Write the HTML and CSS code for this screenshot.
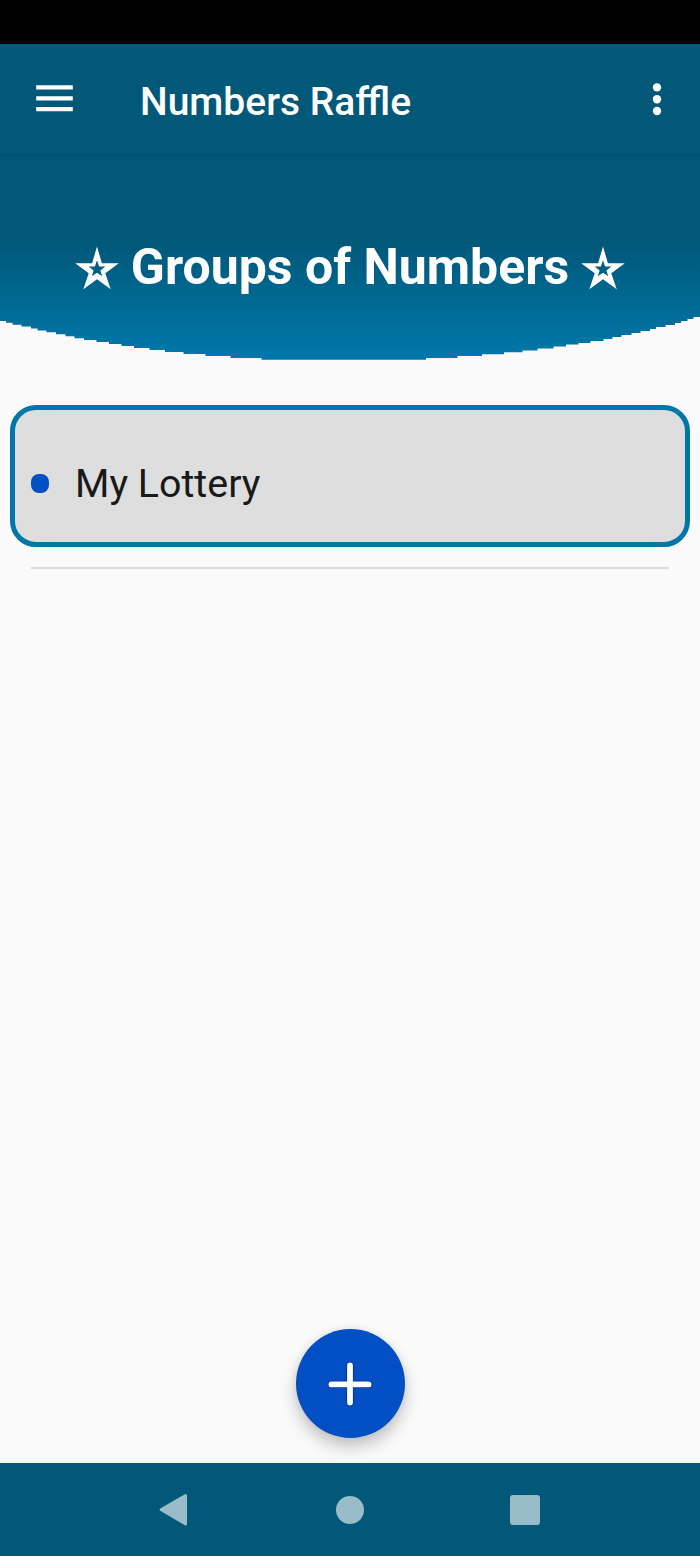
FILE: index.html
```html
<!DOCTYPE html>
<html lang="en">
<head>
    <meta charset="UTF-8">
    <title>Numbers Raffle</title>
    <link rel="stylesheet" href="styles.css">
</head>
<body>
    <div class="status-bar"></div>
    <header class="app-bar">
        <button class="icon-button menu-button" aria-label="Menu">
            <svg width="37" height="27" viewBox="0 0 37 27" fill="#fff">
                <path d="M.2 .3h36.6v4.200H.2zM.2 11.200h36.600v4.200H.2zM.2 22.100h36.600v4.200H.2z"/>
            </svg>
        </button>
        <h1 class="app-title">Numbers Raffle</h1>
        <button class="icon-button" aria-label="More">
            <svg width="10" height="34" viewBox="0 0 10 34" fill="#fff">
                <circle cx="5" cy="5.4" r="4.2"/>
                <circle cx="5" cy="17.2" r="4.2"/>
                <circle cx="5" cy="29" r="4.2"/>
            </svg>
        </button>
    </header>
    <section class="hero">
        <svg class="star" width="44" height="44" viewBox="0 0 44 44" fill="#fff" fill-rule="evenodd">
            <path d="M22 .5L26.900 17.200H43.800L30.300 27.200L35.700 43.300L22 33.300L8.300 43.300L13.700 27.200L.2 17.200H17.100zM22 14.200L19.900 20.400H13.600L18.600 24.400L16.800 30.200L22 26.800L27.200 30.200L25.400 24.400L30.400 20.400H24.100z"/>
        </svg>
        <h2 class="hero-title">Groups of Numbers</h2>
        <svg class="star" width="44" height="44" viewBox="0 0 44 44" fill="#fff" fill-rule="evenodd">
            <path d="M22 .5L26.900 17.200H43.800L30.300 27.200L35.700 43.300L22 33.300L8.300 43.300L13.700 27.200L.2 17.200H17.100zM22 14.200L19.900 20.400H13.600L18.600 24.400L16.800 30.200L22 26.800L27.200 30.200L25.400 24.400L30.400 20.400H24.100z"/>
        </svg>
    </section>
    <main>
        <div class="group-card">
            <span class="bullet"></span>
            <span class="group-name">My Lottery</span>
        </div>
        <hr class="divider">
        <button class="fab" aria-label="Add group">
            <svg width="46" height="46" viewBox="0 0 46 46" stroke-linecap="round" fill="none">
                <path d="M23 4.400v37.200M4.400 23.400h37.200" stroke="#062f85" stroke-width="7.200"/>
                <path d="M23 4.400v37.200M4.400 23.400h37.200" stroke="#fff" stroke-width="5.800"/>
            </svg>
        </button>
    </main>
    <nav class="nav-bar">
        <svg width="30" height="34" viewBox="0 0 30 34" fill="#99bcc9">
            <path d="M1.200 15.600L25.800 1.200Q28 .400 28 2.500V31Q28 33.200 25.800 32.200L1.200 17.800Q0 16.700 1.200 15.600z"/>
        </svg>
        <span class="nav-home"></span>
        <span class="nav-recent"></span>
    </nav>
</body>
</html>
```

FILE: styles.css
```css
* {
    box-sizing: border-box;
}
body {
    margin: 0;
    height: 1556px;
    display: flex;
    flex-direction: column;
    font-family: Roboto, sans-serif;
    background-color: #fafafa;
    color: #191919;
}
svg {
    display: block;
}
button {
    padding: 0;
    border: none;
    background: none;
    cursor: pointer;
}
.status-bar {
    height: 44px;
    background-color: #000;
}
.app-bar {
    height: 110px;
    padding: 0 38px 0 36px;
    display: flex;
    align-items: center;
    background-color: #015879;
    color: #fff;
}
.menu-button {
    margin-bottom: 2px;
}
.app-title {
    flex: 1;
    margin: 6px 0 0 67px;
    font-size: 39px;
    font-weight: 500;
    line-height: 46px;
}
/* bottom edge is a stepped arc */
.hero {
    height: 206px;
    padding-top: 83px;
    display: flex;
    align-items: flex-start;
    justify-content: center;
    gap: 12px;
    color: #fff;
    background: linear-gradient(rgba(0, 30, 45, 0.14), rgba(0, 30, 45, 0) 7px), linear-gradient(#015879 43%, #0077a8 96%);
    clip-path: polygon(0 0, 700px 0, 700px 163px, 693.5px 163px, 693.5px 165px, 687.5px 165px, 687.5px 167px, 681px 167px, 681px 169px, 675px 169px, 675px 171px, 665.5px 171px, 665.5px 173px, 656px 173px, 656px 175px, 650px 175px, 650px 177px, 640.5px 177px, 640.5px 179px, 631.5px 179px, 631.5px 181px, 621.5px 181px, 621.5px 183px, 612.5px 183px, 612.5px 185px, 603.5px 185px, 603.5px 187px, 590.5px 187px, 590.5px 189px, 578.5px 189px, 578.5px 190.5px, 566px 190.5px, 566px 192.5px, 553.5px 192.5px, 553.5px 194.5px, 537.5px 194.5px, 537.5px 196.5px, 522.5px 196.5px, 522.5px 198.3px, 504px 198.3px, 504px 200.3px, 482px 200.3px, 482px 202px, 457.5px 202px, 457.5px 204px, 426px 204px, 426px 205.7px, 261.5px 205.7px, 261.5px 204px, 230.5px 204px, 230.5px 202px, 205.5px 202px, 205.5px 200px, 183.5px 200px, 183.5px 198px, 165px 198px, 165px 196px, 149.5px 196px, 149.5px 194px, 134px 194px, 134px 192px, 121.5px 192px, 121.5px 190px, 109px 190px, 109px 188px, 96.5px 188px, 96.5px 186px, 84px 186px, 84px 184.3px, 74.5px 184.3px, 74.5px 182.3px, 65.5px 182.3px, 65.5px 180.3px, 56px 180.3px, 56px 178.3px, 46.5px 178.3px, 46.5px 176.5px, 37.5px 176.5px, 37.5px 174.5px, 31px 174.5px, 31px 172.5px, 21.5px 172.5px, 21.5px 170.7px, 12.5px 170.7px, 12.5px 168.7px, 6px 168.7px, 6px 167px, 0 167px);
}
.star {
    margin-top: 9px;
}
.hero-title {
    margin: 0;
    font-size: 50px;
    font-weight: 700;
    line-height: 60px;
}
main {
    flex: 1;
    padding-top: 45px;
    display: flex;
    flex-direction: column;
}
.group-card {
    height: 142px;
    margin: 0 10px;
    padding: 14px 16px 0;
    display: flex;
    align-items: center;
    border: 5px solid #0077a8;
    border-radius: 26px;
    background-color: #dedede;
}
.bullet {
    width: 18px;
    height: 19px;
    border-radius: 8px;
    background-color: #014fc3;
}
.group-name {
    margin: 2px 0 0 26px;
    font-size: 39.4px;
    line-height: 46px;
}
.divider {
    width: 638px;
    height: 2px;
    margin: 20px auto 0;
    border: none;
    background-color: #dadada;
}
.fab {
    width: 109px;
    height: 109px;
    margin: auto auto 25px;
    display: flex;
    align-items: center;
    justify-content: center;
    border-radius: 50%;
    background-color: #014fc3;
    box-shadow: 0 9px 16px rgba(0, 0, 0, 0.22), 0 0 7px rgba(0, 0, 0, 0.08);
}
.nav-bar {
    height: 93px;
    padding: 0 160px 0 159px;
    display: flex;
    align-items: center;
    justify-content: space-between;
    background-color: #015879;
}
.nav-home {
    width: 28px;
    height: 28px;
    border-radius: 50%;
    background-color: #99bcc9;
}
.nav-recent {
    width: 30px;
    height: 30px;
    border-radius: 3px;
    background-color: #99bcc9;
}
```
